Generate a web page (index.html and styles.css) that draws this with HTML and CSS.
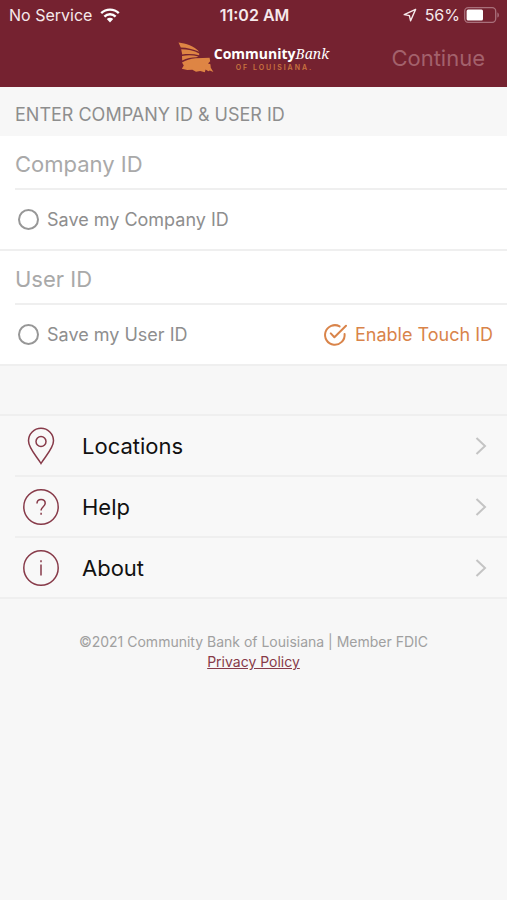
FILE: index.html
```html
<!DOCTYPE html>
<html lang="en">
<head>
<meta charset="utf-8">
<meta name="viewport" content="width=device-width, initial-scale=1">
<title>Community Bank of Louisiana</title>
<link rel="stylesheet" href="styles.css">
</head>
<body>
<header class="top">
  <div class="status">
    <div class="status-left">
      <span>No Service</span>
      <svg width="20" height="15" viewBox="0 0 20 15" aria-hidden="true">
        <g fill="none" stroke="#fff" stroke-width="2.4">
          <path d="M1.2 5.2a12.6 12.6 0 0 1 17.6 0"/>
          <path d="M4.4 8.6a8 8 0 0 1 11.2 0"/>
        </g>
        <path d="M6.8 11a4.6 4.6 0 0 1 6.4 0L10 14.4z" fill="#fff"/>
      </svg>
    </div>
    <span class="time">11:02 AM</span>
    <div class="status-right">
      <svg class="arrow" width="14" height="14" viewBox="0 0 14 14" fill="none" stroke="#f6e9eb" stroke-width="1.4" stroke-linejoin="round" aria-hidden="true">
        <path d="M12.600 1.400L1.200 6.600l5.200 1 1.200 5.200z"/>
      </svg>
      <span>56%</span>
      <svg width="36" height="16" viewBox="0 0 36 16" aria-hidden="true">
        <rect x=".7" y=".7" width="31" height="14.6" rx="3.5" fill="none" stroke="#a9707b" stroke-width="1.3"/>
        <rect x="2.6" y="2.6" width="16.4" height="10.8" rx="1.5" fill="#fff"/>
        <path d="M33.4 5.4c2 .6 2 4.600 0 5.200z" fill="#a9707b"/>
      </svg>
    </div>
  </div>
  <nav class="nav">
    <div class="logo">
      <svg width="36" height="32" viewBox="0 0 36 32" fill="#de8544" aria-hidden="true">
        <path d="M.5.400C8 1.200 16 3.600 21.300 9.800 15 7 9 5.800 2.800 5.600z"/>
        <path d="M3.200 7.200c6.200 0 12.800 1.200 18 4.400v1.600c-5.400-1.400-11-1.600-17 -.8z"/>
        <path d="M4 14c5.600-1 11.200-.8 16.400.4l-2 .8c-5 0-9.600 1-14.200 3.400z"/>
        <path d="M4 20.400c3.800-2.200 8.400-3.800 13.600-4.200l14-.4.600 3.400-2.200 2.400 2.400.6.400 3.600 2.600 4.200-3.600-1.600-1.400.8-2.800-1.600-.8 2.600-4.600-1.200-4.200.8-3.600-2-5.200.2-5.400-1.200 2-3.200z"/>
      </svg>
      <div class="wordmark">
        <div class="bank"><b>Community</b><i>Bank</i></div>
        <div class="state">OF LOUISIANA.</div>
      </div>
    </div>
    <button class="continue" type="button" disabled>Continue</button>
  </nav>
</header>

<main>
  <form>
    <h1 class="heading">ENTER COMPANY ID &amp; USER ID</h1>
    <div class="group">
      <input class="field" type="text" placeholder="Company ID" aria-label="Company ID">
      <div class="options">
        <label class="option"><input class="tick" type="checkbox">Save my Company ID</label>
      </div>
    </div>
    <div class="group">
      <input class="field" type="text" placeholder="User ID" aria-label="User ID">
      <div class="options">
        <label class="option"><input class="tick" type="checkbox">Save my User ID</label>
        <label class="option touch">
          <input class="cover" type="checkbox" checked>
          <svg width="24" height="24" viewBox="0 0 24 24" fill="none" stroke="#d9844a" stroke-width="2" stroke-linecap="round" stroke-linejoin="round" aria-hidden="true">
            <path d="M16.600 3.400A9.800 9.800 0 1 0 21.600 11"/>
            <path d="M7.800 10.400l3.600 3.800L23 2.800"/>
          </svg>
          Enable Touch ID
        </label>
      </div>
    </div>
  </form>

  <ul class="menu">
    <li><a href="#locations">
      <svg class="icon" width="38" height="38" viewBox="0 0 38 38" aria-hidden="true">
        <path d="M19 36.500C15 29.500 6.500 21.500 6.500 13.800a12.500 12.500 0 0 1 25 0C31.500 21.500 23 29.500 19 36.500z"/>
        <circle cx="19" cy="14.500" r="5"/>
      </svg>
      <span class="label">Locations</span>
      <svg class="chevron" width="12" height="20" viewBox="0 0 12 20" aria-hidden="true"><path d="M1.500 2l8.500 8-8.500 8"/></svg>
    </a></li>
    <li><a href="#help">
      <svg class="icon" width="38" height="38" viewBox="0 0 38 38" aria-hidden="true">
        <circle cx="19" cy="19" r="17.200"/>
        <path d="M15 15.400c0-2.600 1.700-4 4.100-4s4.100 1.500 4.100 3.800c0 3.400-4.100 3.600-4.100 7.200"/>
        <path d="M19.100 24.800v2"/>
      </svg>
      <span class="label">Help</span>
      <svg class="chevron" width="12" height="20" viewBox="0 0 12 20" aria-hidden="true"><path d="M1.500 2l8.500 8-8.500 8"/></svg>
    </a></li>
    <li><a href="#about">
      <svg class="icon" width="38" height="38" viewBox="0 0 38 38" aria-hidden="true">
        <circle cx="19" cy="19" r="17.200"/>
        <path d="M19 15.500v11M19 11.200v2"/>
      </svg>
      <span class="label">About</span>
      <svg class="chevron" width="12" height="20" viewBox="0 0 12 20" aria-hidden="true"><path d="M1.500 2l8.500 8-8.500 8"/></svg>
    </a></li>
  </ul>
</main>

<footer class="footer">
  <div>©2021 Community Bank of Louisiana | Member FDIC</div>
  <a href="#privacy">Privacy Policy</a>
</footer>
</body>
</html>
```

FILE: styles.css
```css
* {
  box-sizing: border-box;
}

body {
  margin: 0;
  min-height: 100vh;
  background: #f7f7f7;
  font-family: Inter, "Liberation Sans", sans-serif;
  color: #111;
}

.top {
  background: #752230;
  color: #fff;
}

.status {
  display: grid;
  grid-template-columns: 1fr auto 1fr;
  align-items: center;
  height: 30px;
  padding: 0 7px 0 9px;
  font-size: 16px;
  color: #f6e9eb;
}

.status-left,
.status-right {
  display: flex;
  align-items: center;
  gap: 8px;
}

.status-right {
  justify-content: flex-end;
  gap: 4px;
}

.arrow {
  margin-right: 4px;
}

.time {
  font-weight: 600;
}

.nav {
  display: grid;
  grid-template-columns: 1fr auto 1fr;
  align-items: center;
  height: 57px;
  padding: 0 22px 2px;
}

.logo {
  grid-column: 2;
  display: flex;
  align-items: center;
}

.wordmark {
  display: flex;
  flex-direction: column;
  align-items: center;
}

.bank {
  display: flex;
  align-items: baseline;
  font: 14px/20px "Open Sans", sans-serif;
}

.bank i {
  font-family: "Noto Serif", "DejaVu Serif Condensed", "Liberation Serif", serif;
}

.state {
  padding-left: 6px;
  font-size: 7px;
  line-height: 8px;
  font-weight: 600;
  letter-spacing: 2px;
  color: #c9733f;
}

.continue {
  justify-self: end;
  border: 0;
  padding: 0;
  background: none;
  font: 22px/28px Inter, sans-serif;
  color: #a3616c;
}

.heading {
  margin: 0;
  padding: 18px 15px 11px;
  font-size: 18px;
  line-height: 20px;
  font-weight: 400;
  color: #8e8e8e;
}

.group {
  padding-left: 15px;
  background: #fff;
  border-bottom: 2px solid #efefef;
}

.field {
  display: block;
  width: 100%;
  height: 54px;
  padding: 4px 0 0;
  border: 0;
  border-bottom: 2px solid #efefef;
  border-radius: 0;
  outline: 0;
  background: none;
  font: 22px/28px Inter, sans-serif;
  color: #111;
}

.field::placeholder {
  color: #a9a9a9;
  opacity: 1;
}

.options {
  display: flex;
  align-items: center;
  justify-content: space-between;
  height: 59px;
  padding: 0 14px 0 3px;
}

.option {
  display: flex;
  align-items: center;
  gap: 8px;
  font-size: 18px;
  line-height: 24px;
  color: #8e8e8e;
}

.tick {
  appearance: none;
  width: 21px;
  height: 21px;
  margin: 0;
  border: 2px solid #979797;
  border-radius: 50%;
}

.tick:checked {
  background: #979797;
}

.touch {
  position: relative;
  color: #d9844a;
}

.cover {
  position: absolute;
  inset: 0;
  width: 100%;
  height: 100%;
  margin: 0;
  opacity: 0;
}

.menu {
  list-style: none;
  margin: 48px 0 0;
  padding: 0;
  border-top: 2px solid #efefef;
  border-bottom: 2px solid #efefef;
  background: #f8f8f8;
}

.menu li {
  padding-left: 15px;
}

.menu a {
  display: flex;
  align-items: center;
  height: 59px;
  padding: 0 20px 0 7px;
  color: #111;
  text-decoration: none;
}

.menu li + li a {
  height: 61px;
  border-top: 2px solid #efefef;
}

.icon {
  fill: none;
  stroke: #873a49;
  stroke-width: 1.5;
}

.label {
  flex: 1;
  margin-left: 22px;
  font-size: 22px;
  line-height: 28px;
}

.chevron {
  fill: none;
  stroke: #c4c4c4;
  stroke-width: 2;
}

.footer {
  padding: 33px 15px;
  text-align: center;
  font-size: 14px;
  line-height: 20px;
  color: #a0a0a0;
}

.footer a {
  color: #873a49;
}
```
